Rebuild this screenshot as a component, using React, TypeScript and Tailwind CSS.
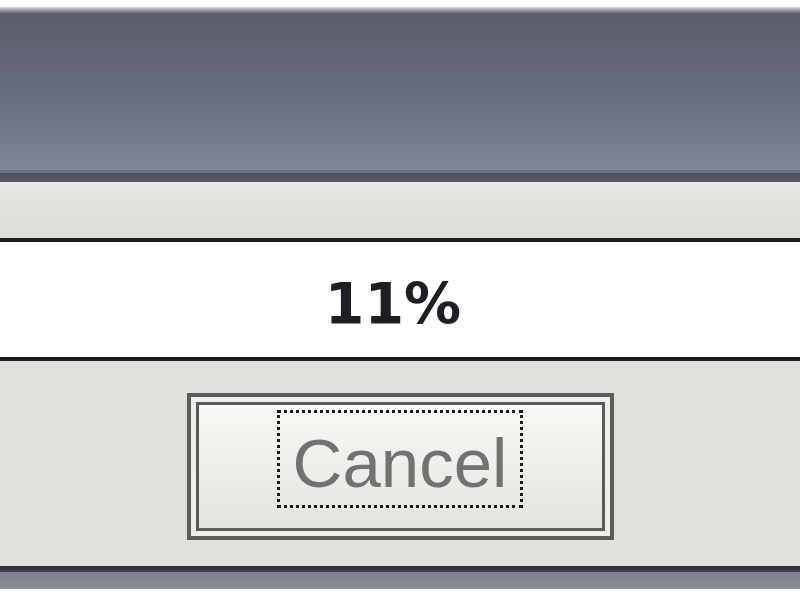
const App = () => {
  return (
    <div className="w-[800px] h-[600px] overflow-hidden flex flex-col bg-white">
      {/* top edge */}
      <div className="h-[7px] bg-white" />
      <div className="h-[6px] bg-gradient-to-b from-[#d8d8da] to-[#6a6c74]" />

      {/* title bar */}
      <div className="h-[157px] bg-gradient-to-b from-[#5a5d68] via-[#676c80] to-[#80869a]" />
      <div className="h-[3px] bg-[#6a6f80]" />
      <div className="h-[9px] bg-gradient-to-b from-[#4a4e5e] to-[#575b69]" />

      {/* upper panel */}
      <div className="h-[56px] bg-gradient-to-b from-[#e6e6e2] to-[#dcdcd8]" />

      {/* progress field */}
      <div className="h-[4px] bg-[#1c1c1c]" />
      <div className="h-[115px] bg-white flex items-center justify-center pr-[14px] pt-[10px]">
        <span
          className="text-[57px] font-bold text-[#1e1e24] leading-none"
          style={{ fontFamily: '"DejaVu Sans", Verdana, sans-serif' }}
        >
          11%
        </span>
      </div>
      <div className="h-[4px] bg-[#1c1c1c]" />

      {/* button panel */}
      <div className="h-[205px] bg-[#e1e1dc] flex justify-center pt-[32px]">
        <div className="w-[427px] h-[147px] border-[4px] border-[#5c5c5c] p-[5px] bg-[#eeeeea]">
          <div className="w-full h-full border-[3px] border-[#5a5a5a] bg-gradient-to-b from-[#f8f8f6] to-[#e4e4de] flex items-start justify-center pt-[5px]">
            <div className="w-[246px] h-[98px] border-[3px] border-dotted border-[#1a1a1a] flex items-center justify-center">
              <span
                className="text-[69px] text-[#727272] leading-none pt-[8px]"
                style={{ fontFamily: '"Liberation Sans", Arial, sans-serif' }}
              >
                Cancel
              </span>
            </div>
          </div>
        </div>
      </div>

      {/* bottom edge */}
      <div className="h-[6px] bg-gradient-to-b from-[#2a2c32] to-[#40444e]" />
      <div className="h-[17px] bg-gradient-to-b from-[#7a7f8a] to-[#8a8e98]" />
      <div className="flex-1 bg-white" />
    </div>
  );
};

export default App;
